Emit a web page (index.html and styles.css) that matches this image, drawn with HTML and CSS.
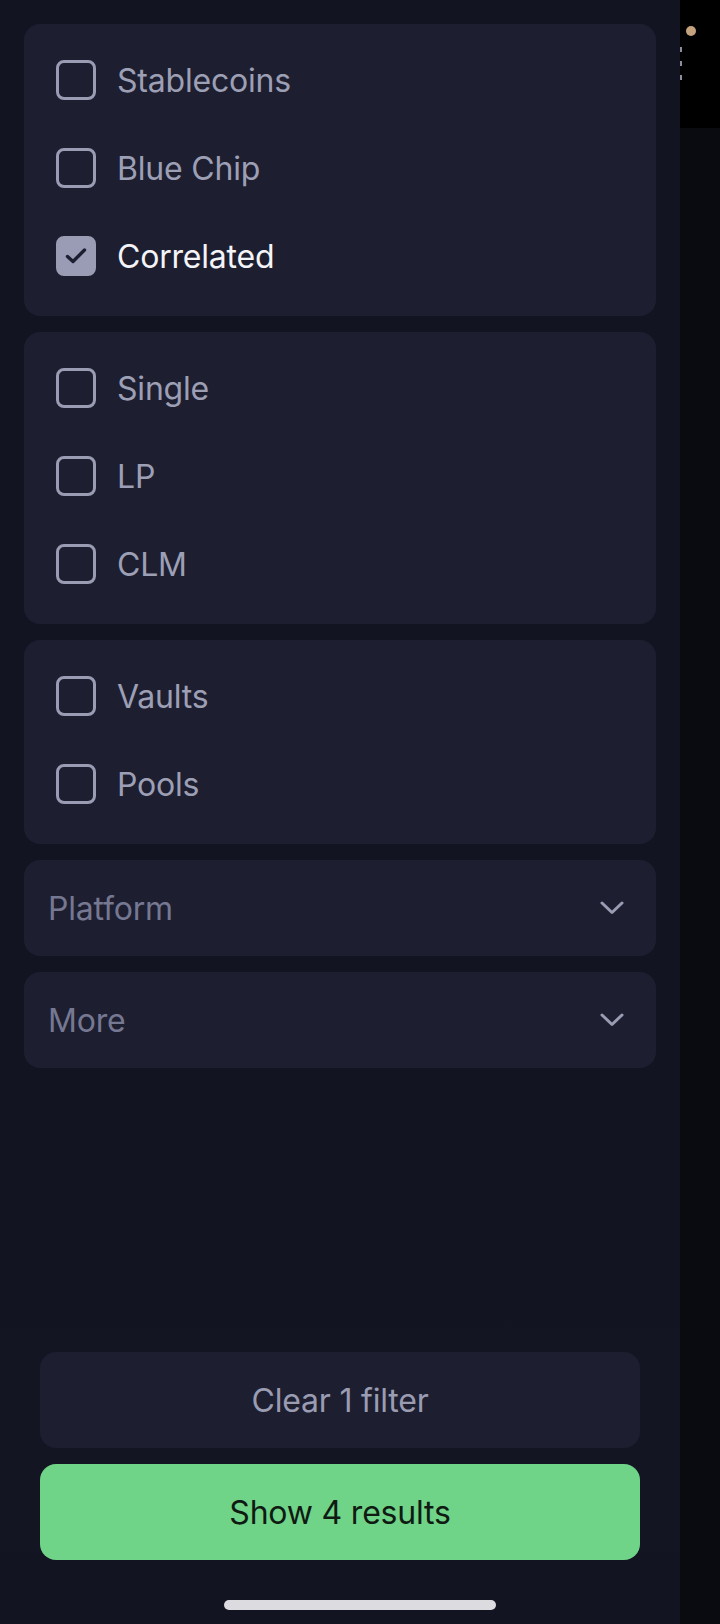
FILE: index.html
```html
<!DOCTYPE html>
<html lang="en">
<head>
<meta charset="utf-8">
<title>Filters</title>
<link rel="stylesheet" href="styles.css">
</head>
<body>
<div class="screen">
  <main class="panel">
    <div class="filters">
      <section class="card">
        <label class="row"><span class="box"></span><span class="label">Stablecoins</span></label>
        <label class="row"><span class="box"></span><span class="label">Blue Chip</span></label>
        <label class="row checked"><span class="box"><svg viewBox="0 0 24 20" width="24" height="20"><path d="M3.5 10.5 L9 15.5 L20.5 4" fill="none" stroke="#1d1f31" stroke-width="3.4" stroke-linecap="round" stroke-linejoin="round"/></svg></span><span class="label">Correlated</span></label>
      </section>
      <section class="card">
        <label class="row"><span class="box"></span><span class="label">Single</span></label>
        <label class="row"><span class="box"></span><span class="label">LP</span></label>
        <label class="row"><span class="box"></span><span class="label">CLM</span></label>
      </section>
      <section class="card">
        <label class="row"><span class="box"></span><span class="label">Vaults</span></label>
        <label class="row"><span class="box"></span><span class="label">Pools</span></label>
      </section>
      <button class="dropdown"><span>Platform</span><svg viewBox="0 0 24 14" width="24" height="14"><path d="M2 2 L12 11.5 L22 2" fill="none" stroke="#9a9cb3" stroke-width="3" stroke-linecap="round" stroke-linejoin="round"/></svg></button>
      <button class="dropdown"><span>More</span><svg viewBox="0 0 24 14" width="24" height="14"><path d="M2 2 L12 11.5 L22 2" fill="none" stroke="#9a9cb3" stroke-width="3" stroke-linecap="round" stroke-linejoin="round"/></svg></button>
    </div>
    <div class="footer">
      <button class="btn btn-clear">Clear 1 filter</button>
      <button class="btn btn-show">Show 4 results</button>
    </div>
  </main>
  <aside class="strip">
    <div class="strip-top">
      <span class="dot"></span>
      <span class="dashes"><i></i><i></i><i></i></span>
    </div>
  </aside>
  <div class="home-indicator"></div>
</div>
</body>
</html>
```

FILE: styles.css
```css
* { box-sizing: border-box; }
html, body { margin: 0; padding: 0; }
body {
  width: 720px;
  height: 1624px;
  background: #0a0b11;
  font-family: Inter, "Noto Sans", sans-serif;
  overflow: hidden;
}
.screen {
  position: relative;
  display: flex;
  width: 720px;
  height: 1624px;
}
.panel {
  width: 680px;
  height: 1624px;
  background: #121421;
  display: flex;
  flex-direction: column;
  justify-content: space-between;
  padding: 24px 24px 0 24px;
}
.filters {
  display: flex;
  flex-direction: column;
  gap: 16px;
}
.card {
  background: #1d1f31;
  border-radius: 16px;
  padding: 12px 32px 16px 32px;
  display: flex;
  flex-direction: column;
}
.row {
  display: flex;
  align-items: center;
  gap: 21px;
  height: 88px;
}
.box {
  width: 40px;
  height: 40px;
  border: 3px solid #9a9cb3;
  border-radius: 8px;
  display: flex;
  align-items: center;
  justify-content: center;
  flex: none;
}
.checked .box {
  background: #9a9cb6;
}
.label {
  font-size: 32px;
  color: #9d9fb5;
  letter-spacing: -0.2px;
}
.checked .label { color: #f4f4f8; }
.dropdown {
  appearance: none;
  border: 0;
  width: 100%;
  height: 96px;
  background: #1d1f31;
  border-radius: 16px;
  padding: 0 32px 0 24px;
  display: flex;
  align-items: center;
  justify-content: space-between;
  font-family: inherit;
  font-size: 32px;
  color: #767891;
  letter-spacing: -0.2px;
}
.footer {
  margin: 0 -24px;
  padding: 56px 40px 64px 40px;
  background: linear-gradient(to bottom, rgba(18,20,33,0) 0%, #131523 30%, #121421 100%);
  display: flex;
  flex-direction: column;
  gap: 16px;
}
.btn {
  appearance: none;
  border: 0;
  width: 100%;
  height: 96px;
  border-radius: 16px;
  font-family: inherit;
  font-size: 32px;
  letter-spacing: -0.2px;
}
.btn-clear {
  background: #1d1f31;
  color: #9a9cb2;
}
.btn-show {
  background: #6fd388;
  color: #0f1a13;
}
.home-indicator {
  position: absolute;
  left: 224px;
  top: 1600px;
  width: 272px;
  height: 10px;
  border-radius: 5px;
  background: #dcdce0;
}
.strip {
  width: 40px;
  height: 1624px;
  background: #0a0b10;
}
.strip-top {
  position: relative;
  height: 128px;
  background: #000;
}
.dot {
  position: absolute;
  left: 6px;
  top: 26px;
  width: 10px;
  height: 10px;
  border-radius: 50%;
  background: #c5a27e;
}
.dashes {
  position: absolute;
  left: 0;
  top: 47px;
  display: flex;
  flex-direction: column;
  gap: 9px;
}
.dashes i {
  display: block;
  width: 2px;
  height: 5px;
  background: #8c8ea0;
}
```
